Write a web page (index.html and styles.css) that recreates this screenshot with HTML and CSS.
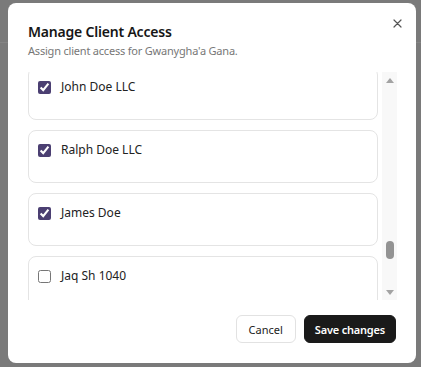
FILE: index.html
```html
<!DOCTYPE html>
<html lang="en">
<head>
    <meta charset="UTF-8">
    <meta name="viewport" content="width=device-width, initial-scale=1.0">
    <title>Manage Client Access</title>
    <link rel="stylesheet" href="styles.css">
</head>
<body>
    <div class="dialog">
        <button class="close" aria-label="Close">
            <svg width="9" height="9" viewBox="0 0 9 9"><path d="M1 1L8 8M8 1L1 8" stroke="#555" stroke-width="1.2" stroke-linecap="round"/></svg>
        </button>
        <h2 class="title">Manage Client Access</h2>
        <p class="subtitle">Assign client access for Gwanygha'a Gana.</p>
        <div class="list-wrap">
            <div class="client-list">
                <label class="client-card"><input type="checkbox" checked><span>John Doe LLC</span></label>
                <label class="client-card"><input type="checkbox" checked><span>Ralph Doe LLC</span></label>
                <label class="client-card"><input type="checkbox" checked><span>James Doe</span></label>
                <label class="client-card"><input type="checkbox"><span>Jaq Sh 1040</span></label>
            </div>
            <div class="scrollbar">
                <span class="arrow up"></span>
                <span class="thumb"></span>
                <span class="arrow down"></span>
            </div>
        </div>
        <div class="footer">
            <button class="btn cancel">Cancel</button>
            <button class="btn save">Save changes</button>
        </div>
    </div>
</body>
</html>
```

FILE: styles.css
```css
html, body {
    height: 100%;
}
body {
    margin: 0;
    background: linear-gradient(to bottom, #7a7a7a 42px, #848484 42px, #848484 43px, #7a7a7a 43px);
    font-family: "Noto Sans", "Open Sans", sans-serif;
    color: #1f1f1f;
    padding-top: 3px;
    box-sizing: border-box;
}
.dialog {
    position: relative;
    box-sizing: border-box;
    width: 408px;
    height: 360px;
    margin-left: 8px;
    padding: 19px 20px 20px 20px;
    background: white;
    border-radius: 8px;
    display: flex;
    flex-direction: column;
}
.close {
    position: absolute;
    top: 12px;
    right: 11px;
    width: 16px;
    height: 16px;
    padding: 0;
    border: none;
    background: none;
    display: flex;
    align-items: center;
    justify-content: center;
}
.title {
    margin: 0;
    font-size: 14px;
    line-height: 19px;
    font-weight: 600;
    letter-spacing: -0.2px;
    color: #161616;
}
.subtitle {
    margin: 2px 0 0;
    font-size: 11px;
    line-height: 16px;
    letter-spacing: -0.2px;
    color: #777;
}
.list-wrap {
    margin-top: 13px;
    height: 228px;
    display: flex;
    gap: 4px;
    margin-right: -1px;
}
.client-list {
    flex: 1;
    overflow: hidden;
}
.client-card {
    display: flex;
    align-items: center;
    align-content: flex-start;
    flex-wrap: wrap;
    gap: 10px;
    height: 53px;
    box-sizing: border-box;
    padding: 11px 12px 0 9px;
    margin-bottom: 10px;
    border: 1px solid #e4e4e4;
    border-radius: 8px;
    font-size: 12px;
    line-height: 16px;
    color: #222;
}
.client-card:first-child {
    margin-top: -5px;
}
.client-card input {
    margin: 0;
    width: 13px;
    height: 13px;
    accent-color: #4b3f72;
}
.scrollbar {
    width: 15px;
    background: #f8f8f8;
    display: flex;
    flex-direction: column;
    align-items: center;
}
.arrow {
    width: 0;
    height: 0;
    border-left: 4px solid transparent;
    border-right: 4px solid transparent;
}
.arrow.up {
    margin-top: 6px;
    border-bottom: 5px solid #a3a3a3;
}
.arrow.down {
    margin-top: auto;
    margin-bottom: 5px;
    border-top: 5px solid #a3a3a3;
}
.thumb {
    margin-top: 158px;
    width: 8px;
    height: 18px;
    border-radius: 4px;
    background: #939393;
}
.footer {
    margin-top: 15px;
    display: flex;
    justify-content: flex-end;
    gap: 8px;
}
.btn {
    height: 28px;
    border-radius: 6px;
    font-family: inherit;
    font-size: 11px;
    padding: 0 12px;
    cursor: pointer;
}
.cancel {
    background: white;
    border: 1px solid #e2e2e2;
    color: #222;
}
.save {
    padding: 0 10px;
    letter-spacing: -0.2px;
    background: #1a1a1a;
    border: 1px solid #1a1a1a;
    color: white;
    font-weight: 600;
}
```
